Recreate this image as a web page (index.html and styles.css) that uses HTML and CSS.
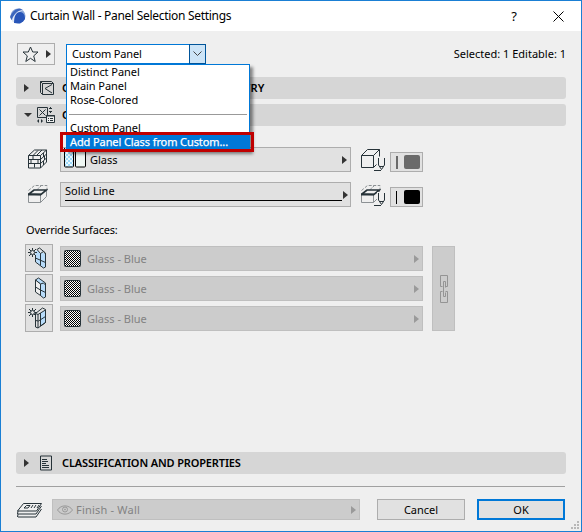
FILE: index.html
```html
<!DOCTYPE html>
<html lang="en">

<head>
    <meta charset="UTF-8">
    <meta name="viewport" content="width=device-width, initial-scale=1.0">
    <title>Curtain Wall - Panel Selection Settings</title>
    <link rel="stylesheet" href="styles.css">
</head>

<body>
    <!-- shared icon parts -->
    <svg class="defs" width="0" height="0">
        <defs>
            <pattern id="hatch" width="2" height="2" patternUnits="userSpaceOnUse">
                <rect width="2" height="2" fill="#fff" stroke="none" />
                <path d="M0 0h1v1H0zM1 1h1v1H1z" fill="#000" stroke="none" />
            </pattern>
            <pattern id="dots" width="4" height="4" patternUnits="userSpaceOnUse">
                <rect width="4" height="4" fill="#e8f8ff" stroke="none" />
                <path d="M0 0h2v2H0zM2 2h2v2H2z" fill="#9bd8f8" stroke="none" />
            </pattern>
            <symbol id="sun" viewBox="0 0 9 9">
                <circle cx="4.5" cy="4.5" r="2" />
                <path d="M4.5 0v2M4.5 7v2M0 4.5h2M7 4.5h2M1 1l2 2M6 6l2 2M8 1L6 3M3 6L1 8" />
            </symbol>
            <symbol id="slab" viewBox="0 0 20 20">
                <path d="M.5 6.500l6-5h12.500v4" stroke="#8c9194" stroke-dasharray="3 1.500" />
                <path d="M13 2L8 6.500" stroke="#8c9194" stroke-dasharray="2 1" />
                <path d="M.5 10.500v8h12l6-6v-7M12.500 11v7.500" stroke="#8c9194" />
                <path d="M1 10l5-4h12.500l-5.500 4.500z" fill="#efefef" stroke="#263238" stroke-width="1.700" />
                <path d="M0 10.500h13" stroke="#263238" stroke-width="2" />
            </symbol>
            <symbol id="pen" viewBox="0 0 12 14">
                <path d="M4.500 1v7l3 4.500 3-4.500V1M5 9.500h5M0 13.500h7" />
            </symbol>
        </defs>
    </svg>

    <div class="window">
        <div class="titlebar">
            <svg class="logo" width="16" height="16" viewBox="0 0 16 16">
                <circle cx="8" cy="8" r="7.500" fill="#8ba7d8" />
                <path d="M2 13C3 7 6 2 10 1l3 1.500C8 3 5 8 5 15z" fill="#e3ebf8" />
                <path d="M4 15C4 8 6 4 10 4c4 0 5 4 5 7l-2 2.500-3 2z" fill="#2855b8" />
                <path d="M0 9C2 4 5 1 10 .500L13 2C8 2 4 6 1.500 12z" fill="#3c66bd" />
            </svg>
            <span class="title">Curtain Wall - Panel Selection Settings</span>
            <span class="help">?</span>
            <svg class="close" width="11" height="11" viewBox="0 0 11 11">
                <path d="M.5.500l10 10M10.500.500l-10 10" />
            </svg>
        </div>

        <div class="content">
            <div class="toolbar">
                <button class="favorite">
                    <svg width="17" height="17" viewBox="0 0 17 17">
                        <path d="M8.500 1l2.200 5h5.300l-4.300 3.900 1.500 5.600-4.700-3.200-4.700 3.200 1.500-5.600L1 6h5.300z" />
                    </svg>
                    <i class="arrow"></i>
                </button>
                <div class="combo">
                    <span>Custom Panel</span>
                    <div class="combo-button">
                        <svg width="9" height="6" viewBox="0 0 9 6">
                            <path d="M.5.500l4 4 4-4" />
                        </svg>
                    </div>
                    <ul class="menu">
                        <li>Distinct Panel</li>
                        <li>Main Panel</li>
                        <li>Rose-Colored</li>
                        <li class="separator"></li>
                        <li>Custom Panel</li>
                        <li class="selected">Add Panel Class from Custom...</li>
                    </ul>
                    <div class="highlight"></div>
                </div>
                <span class="status">Selected: 1 Editable: 1</span>
            </div>

            <div class="section">
                <i class="arrow"></i>
                <svg width="16" height="16" viewBox="0 0 16 16">
                    <path d="M1.500 1.500h11l2 2v11h-11l-2-2zM3.500 3.500h11M3.500 3.500v11M1.500 1.500l2 2M13 4.500L6 8.500l7 4.500" />
                </svg>
                <b class="wide">CUSTOM PANEL SIZE AND GEOMETRY</b>
            </div>
            <div class="section section-open">
                <i class="arrow down"></i>
                <svg width="18" height="17" viewBox="0 0 18 17">
                    <path d="M.5.500h10v10H.500zM2.500 2.500l6 6M8.500 2.500l-6 6" />
                    <path d="M13.500 0v1M12 1.500h3M12 4.500h3M13.500 5v1M1.500 12.500v3M4.500 12.500v3M0 14h1M5 14h1" />
                    <path d="M9.500 8.500h8v7h-8z" fill="#efefef" />
                    <path d="M9 9h9M11 11.500h1M13 11.500h3M11 13.500h1M13 13.500h3" />
                </svg>
                <b>CUSTOM PANEL</b>
            </div>

            <div class="row">
                <svg class="row-icon" width="20" height="20" viewBox="0 0 20 20">
                    <path d="M.5 6.500l6-5.500h12l-6 5.500zM.5 6.500v12.500h12V6.500M12.500 19l6-6V1M.5 10.500h12l6-5.500M.5 14.500h12l6-5.500M5 6.500v4M10 10.500v4M3 10.500v4M6.500 14.500v4M5 6.500L10 1.500M9 6l5-5M15.500 4v4M16.500 7v4M15.500 12v4" />
                </svg>
                <div class="field">
                    <svg class="glass" width="22" height="20" viewBox="0 0 22 20">
                        <rect x=".5" y="-3" width="9" height="22" rx="1" fill="url(#dots)" />
                        <rect x="11.500" y="-3" width="10" height="22" rx="1" fill="#eff7f3" />
                    </svg>
                    <span>Glass</span>
                    <i class="arrow"></i>
                </div>
                <svg class="pen-icon" width="25" height="23" viewBox="0 0 25 23">
                    <path d="M.5 7.500h12v12H.500zM.5 7.500l6-6h12l-6 6M18.500 1.500v7M12.500 19.500l3-3" />
                    <use href="#pen" x="13" y="9" width="12" height="14" />
                </svg>
                <div class="pen gray"></div>
            </div>

            <div class="row">
                <svg class="row-icon" width="20" height="20" viewBox="0 0 20 20">
                    <use href="#slab" width="20" height="20" />
                </svg>
                <div class="field line">
                    <span>Solid Line</span>
                    <i class="arrow"></i>
                </div>
                <svg class="pen-icon" width="25" height="23" viewBox="0 0 25 23">
                    <use href="#slab" y="1" width="20" height="20" />
                    <path d="M16 9h9v14h-9z" fill="#efefef" stroke="none" />
                    <use href="#pen" x="13" y="9" width="12" height="14" />
                </svg>
                <div class="pen"></div>
            </div>

            <div class="label">Override Surfaces:</div>

            <div class="override">
                <div class="surfaces">
                    <div class="surface">
                        <button>
                            <svg width="22" height="22" viewBox="0 0 22 22">
                                <path d="M7.500 4h5l5 3v13l-2 1-8-6z" fill="#b8dcfa" stroke="none" />
                                <path d="M9 2.500L11.500 1l6 5v14l-2 1-8-6V9M12.500 5.500V18.500M7.500 11l10 4.500" />
                                <path d="M9 2.500l3.500 4 3-2 2 2.500" fill="#efefef" />
                                <use href="#sun" x="0" y="1" width="9" height="9" />
                            </svg>
                        </button>
                        <div class="field disabled">
                            <svg width="17" height="17"><rect x=".5" y=".5" width="16" height="16" rx="1" fill="url(#hatch)" /></svg>
                            <span>Glass - Blue</span>
                            <i class="arrow"></i>
                        </div>
                    </div>
                    <div class="surface">
                        <button>
                            <svg width="22" height="22" viewBox="0 0 22 22">
                                <path d="M7.500 3l3-2 7 5v14l-2 1-3-2.500V7z" fill="#b8dcfa" />
                                <path d="M7.500 3l5 4v11.500l-5-3.500z" fill="#efefef" />
                                <path d="M7.500 10l5 3 5 2.500M12.500 7l3-1 2 2" />
                            </svg>
                        </button>
                        <div class="field disabled">
                            <svg width="17" height="17"><rect x=".5" y=".5" width="16" height="16" rx="1" fill="url(#hatch)" /></svg>
                            <span>Glass - Blue</span>
                            <i class="arrow"></i>
                        </div>
                    </div>
                    <div class="surface">
                        <button>
                            <svg width="22" height="22" viewBox="0 0 22 22">
                                <path d="M12.500 6l5-3v12.500l-5 3.500z" fill="#b8dcfa" />
                                <path d="M7.500 6.500l7-5.500 3 1.500v13L10 21l-2.500-1zM7.500 6.500l2.500 1 2.500-1.500M12.500 6v13M7.500 13.500l3 .5 7-4.500M10 7.500V21" />
                                <use href="#sun" x="0" y="1" width="9" height="9" />
                            </svg>
                        </button>
                        <div class="field disabled">
                            <svg width="17" height="17"><rect x=".5" y=".5" width="16" height="16" rx="1" fill="url(#hatch)" /></svg>
                            <span>Glass - Blue</span>
                            <i class="arrow"></i>
                        </div>
                    </div>
                </div>
                <div class="link">
                    <svg width="8" height="28" viewBox="0 0 8 28">
                        <path d="M2.500 11.500h-2V.500h7v11h-2M2.500 16.500h-2v11h7v-11h-2" />
                        <path d="M3.500 21.500v-15h2v6M3.500 21.500h2v-4" />
                    </svg>
                </div>
            </div>

            <div class="section section-last">
                <i class="arrow"></i>
                <svg width="14" height="16" viewBox="0 0 14 16">
                    <path d="M1.500 1h11v14h-11zM3 4.500h5M3 6.500h6M3 8.500h4M3 10.500h7M3 12.500h7" />
                </svg>
                <b>CLASSIFICATION AND PROPERTIES</b>
            </div>

            <div class="footer">
                <svg class="layers" width="26" height="16" viewBox="0 0 26 16">
                    <path d="M6.500 1.500h18l-5 7.500H.500zM1 12h18l5.500-8M1 15h18l5.500-8M1 9l-.5 3M1 12l-.5 3M9.500 3.500h3.500L11 6H7zM16 3l-2 3M19 3l-2 3M22 3l-2 3" />
                </svg>
                <div class="field disabled layer">
                    <svg class="eye" width="16" height="10" viewBox="0 0 16 10">
                        <path d="M.5 5C4-.500 12-.500 15.500 5 12 10.500 4 10.500.500 5z" />
                        <circle cx="8" cy="4.500" r="2.500" />
                        <circle cx="8" cy="4.500" r=".5" />
                    </svg>
                    <span>Finish - Wall</span>
                    <i class="arrow"></i>
                </div>
                <button class="cancel">Cancel</button>
                <button class="ok">OK</button>
            </div>
        </div>

        <svg class="grip" width="8" height="8" viewBox="0 0 8 8">
            <path d="M6 0h2v2H6zM3 3h2v2H3zM6 3h2v2H6zM0 6h2v2H0zM3 6h2v2H3zM6 6h2v2H6z" />
        </svg>
    </div>
</body>

</html>
```
FILE: styles.css
```css
* {
    box-sizing: border-box;
}

body {
    margin: 0;
    font-family: "Noto Sans", "Open Sans", sans-serif;
    font-size: 11px;
    line-height: 14px;
    color: #000;
}

.defs {
    position: absolute;
}

svg {
    display: block;
    flex: none;
    fill: none;
    stroke: #263238;
}

.window {
    position: relative;
    width: 582px;
    height: 532px;
    border: 1px solid #1a7fd4;
    background: #efefef;
    white-space: nowrap;
    overflow: hidden;
}

.titlebar {
    display: flex;
    align-items: center;
    height: 30px;
    padding: 0 17px 0 9px;
    background: #fff;
}

.logo {
    stroke: none;
}

.title {
    flex: 1;
    margin-left: 4px;
    font-size: 12px;
    letter-spacing: -0.3px;
}

.help {
    margin-right: 36px;
    font-size: 13px;
}

.close {
    stroke: #000;
}

.content {
    padding: 12px 15px 0;
}

.toolbar {
    display: flex;
    align-items: center;
    height: 22px;
    padding-left: 1px;
}

button {
    display: flex;
    align-items: center;
    justify-content: center;
    padding: 0;
    border: 1px solid #adadad;
    background: #e1e1e1;
    font: inherit;
    color: #000;
}

.favorite {
    width: 38px;
    height: 22px;
    gap: 7px;
    background: #efefef;
}

.arrow {
    flex: none;
    width: 0;
    height: 0;
    border: 4px solid transparent;
    border-left: 5px solid #333;
    border-right: 0;
}

.arrow.down {
    border: 4px solid transparent;
    border-top: 4px solid #333;
    border-bottom: 0;
}

.combo {
    position: relative;
    display: flex;
    align-items: center;
    justify-content: space-between;
    width: 140px;
    height: 20px;
    margin-left: 11px;
    padding-left: 5px;
    border: 1px solid #0078d7;
    background: #fff;
    letter-spacing: -0.15px;
}

.combo-button {
    display: flex;
    align-items: center;
    justify-content: center;
    width: 17px;
    height: 20px;
    margin-right: -1px;
    border: 1px solid #005499;
    background: #cce4f7;
}

.combo-button svg {
    stroke: #444;
}

.menu {
    position: absolute;
    top: 19px;
    left: -1px;
    z-index: 2;
    width: 184px;
    height: 87px;
    margin: 0;
    padding: 0;
    border: 1px solid #0078d7;
    background: #fff;
    box-shadow: 3px 3px 3px rgba(0, 0, 0, 0.45);
    list-style: none;
    letter-spacing: -0.06px;
}

.menu li {
    height: 14px;
    padding-left: 3px;
}

.menu .separator {
    margin: 0 2px;
    background: linear-gradient(#999, #999) 0 7px / 100% 1px no-repeat;
}

.menu .selected {
    background: #0078d7;
    color: #fff;
    letter-spacing: -0.1px;
    -webkit-text-stroke: 0.25px #fff;
}

.highlight {
    position: absolute;
    top: 87px;
    left: -7px;
    z-index: 3;
    width: 194px;
    height: 20px;
    border: 3px solid #c00000;
}

.status {
    margin-left: auto;
}

.section {
    display: flex;
    align-items: center;
    height: 22px;
    margin-top: 12px;
    padding-left: 8px;
    border-radius: 3px;
    background: #d6d6d6;
}

.section svg {
    margin-left: 10px;
}

.section b {
    position: absolute;
    left: 61px;
    font-weight: 600;
    letter-spacing: -0.14px;
}

.section .wide {
    letter-spacing: 0.15px;
}

.section-open {
    margin: 5px 0 21px;
}

.section-open svg {
    margin-left: 5px;
}

.row {
    display: flex;
    height: 25px;
    margin-bottom: 10px;
    padding-left: 11px;
}

.row-icon {
    margin: 2px 12px 0 1px;
}

.field {
    display: flex;
    align-items: center;
    width: 291px;
    height: 25px;
    padding: 0 3px;
    border: 1px solid #adadad;
    background: #e1e1e1;
}

.field .arrow {
    margin-left: auto;
}

.glass {
    align-self: flex-start;
    margin-right: 4px;
    stroke: #000;
}

.line {
    position: relative;
    align-items: flex-start;
    padding: 1px 2px 0 4px;
}

.line::after {
    content: "";
    position: absolute;
    bottom: 5px;
    left: 4px;
    width: 277px;
    height: 1px;
    background: #000;
}

.line .arrow {
    margin-top: 7px;
}

.pen-icon {
    margin: 1px 4px 0 10px;
}

.pen {
    display: flex;
    align-items: center;
    gap: 7px;
    width: 33px;
    height: 20px;
    margin-top: 5px;
    padding-left: 5px;
    border: 1px solid #adadad;
    background: #e1e1e1;
}

.pen::before {
    content: "";
    width: 1px;
    height: 13px;
    background: #000;
}

.pen::after {
    content: "";
    width: 16px;
    height: 14px;
    border-radius: 2px;
    background: #000;
}

.pen.gray::before {
    width: 2px;
    margin-right: -1px;
    background: #6a6a6a;
}

.pen.gray::after {
    background: #6a6a6a;
}

.label {
    height: 14px;
    margin: 16px 0 7px 10px;
    letter-spacing: -0.2px;
}

.override {
    display: flex;
    align-items: center;
    gap: 9px;
    padding-left: 9px;
}

.surfaces {
    display: grid;
    gap: 2px;
}

.surface {
    display: flex;
    align-items: center;
    gap: 7px;
}

.surface button {
    width: 28px;
    height: 28px;
}

.surface .field {
    width: 363px;
    margin-top: 1px;
}

.surface .field svg {
    margin-right: 6px;
}

.disabled {
    border-color: #bfbfbf;
    background: #ccc;
    color: #838383;
}

.disabled .arrow {
    border-left-color: #9a9a9a;
}

.link {
    display: flex;
    align-items: center;
    justify-content: center;
    width: 23px;
    height: 85px;
    margin-top: 1px;
    border: 1px solid #bfbfbf;
    background: #ccc;
}

.link svg {
    stroke: #949494;
}

.section-last {
    margin-top: 120px;
}

.footer {
    display: flex;
    align-items: center;
    margin: 12px 1px 0 0;
    padding: 12px 0 0 1px;
    border-top: 1px solid #a0a0a0;
}

.layers {
    margin-right: 9px;
}

.footer .layer {
    width: 308px;
    height: 21px;
    padding-left: 4px;
    letter-spacing: 0.2px;
}

.eye {
    margin-right: 3px;
    stroke: #999;
}

.footer button {
    width: 88px;
    height: 21px;
}

.footer .cancel {
    margin: 0 12px 0 17px;
}

.footer .ok {
    border: 2px solid #0078d7;
}

.grip {
    position: absolute;
    right: 2px;
    bottom: 2px;
    fill: #b8b8b8;
    stroke: none;
}
```
